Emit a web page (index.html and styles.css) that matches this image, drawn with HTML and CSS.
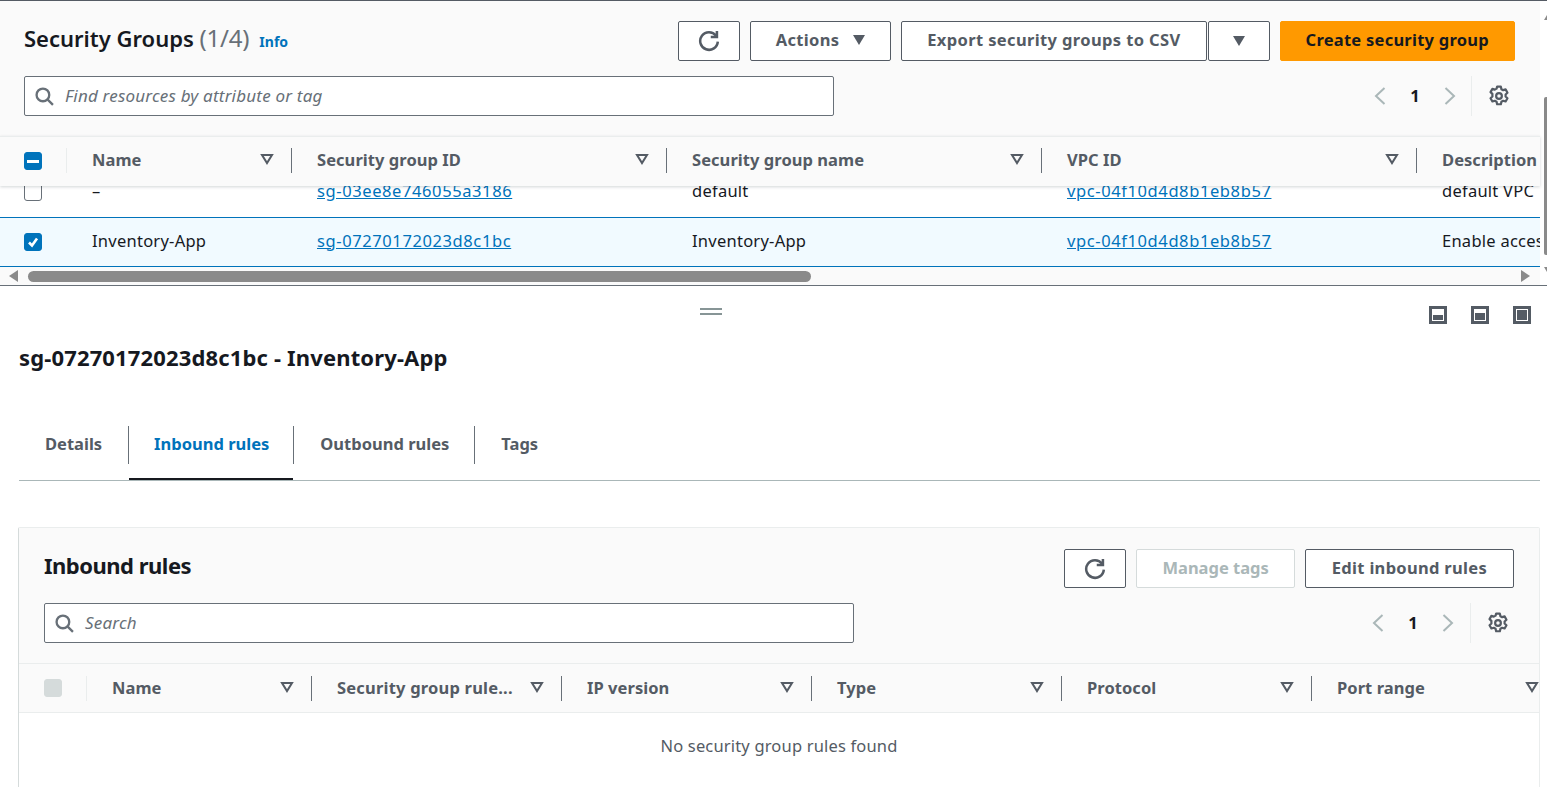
FILE: index.html
```html
<!DOCTYPE html>
<html lang="en">
<head>
  <meta charset="utf-8" />
  <title>Security Groups</title>
  <link rel="stylesheet" href="styles.css">
</head>
<body>
  <svg class="defs" width="0" height="0">
    <symbol id="refresh" viewBox="0 0 20 20"><path d="M16.4 5.2A8 8 0 1 0 18 10.5" /><path d="M17.2 .8v5.6h-5.6" /></symbol>
    <symbol id="search" viewBox="0 0 18 18"><circle cx="7.5" cy="7.5" r="6" /><path d="M12 12l5 5" /></symbol>
    <symbol id="gear" viewBox="0 0 20 20"><path d="M8.3 1.5h3.4l.5 2.3 1.6.9 2.2-.7 1.7 3-1.7 1.6v1.8l1.7 1.6-1.7 3-2.2-.7-1.6.9-.5 2.3H8.3l-.5-2.3-1.6-.9-2.2.7-1.7-3 1.7-1.6V8.1L2.3 6.5l1.7-3 2.2.7 1.6-.9z" /><circle cx="10" cy="10" r="2.6" /></symbol>
    <symbol id="filter" viewBox="0 0 14 12"><path d="M2 2h10l-5 8z" /></symbol>
    <symbol id="chev-left" viewBox="0 0 12 18"><path d="M10.5 1L2 9l8.5 8" /></symbol>
    <symbol id="chev-right" viewBox="0 0 12 18"><path d="M1.5 1L10 9l-8.5 8" /></symbol>
  </svg>

  <section class="top-panel">
    <div class="top-main">
      <div class="toolbar">
        <h1>Security Groups <span class="count">(1/4)</span></h1>
        <a class="info">Info</a>
        <div class="actions">
          <button class="btn btn-icon"><svg class="ico-refresh"><use href="#refresh" /></svg></button>
          <button class="btn">Actions <span class="caret"></span></button>
          <div class="btn-split">
            <button class="btn btn-export">Export security groups to CSV</button>
            <button class="btn btn-icon"><span class="caret"></span></button>
          </div>
          <button class="btn btn-primary">Create security group</button>
        </div>
      </div>
      <div class="filter-row">
        <div class="search-box"><svg class="ico-search"><use href="#search" /></svg><span>Find resources by attribute or tag</span></div>
        <div class="pager">
          <svg class="chev"><use href="#chev-left" /></svg><b>1</b><svg class="chev"><use href="#chev-right" /></svg>
          <span class="pager-sep"><svg class="ico-gear"><use href="#gear" /></svg></span>
        </div>
      </div>
      <div class="table-head sg-cols">
        <div class="th th-check"><span class="check check-mixed"></span></div>
        <div class="th">Name<svg class="ico-filter"><use href="#filter" /></svg></div>
        <div class="th">Security group ID<svg class="ico-filter"><use href="#filter" /></svg></div>
        <div class="th">Security group name<svg class="ico-filter"><use href="#filter" /></svg></div>
        <div class="th">VPC ID<svg class="ico-filter"><use href="#filter" /></svg></div>
        <div class="th th-last">Description</div>
      </div>
      <div class="table-body">
        <div class="tr sg-cols tr-clipped">
          <div class="td td-check"><span class="check"></span></div>
          <div class="td">–</div>
          <div class="td"><a>sg-03ee8e746055a3186</a></div>
          <div class="td">default</div>
          <div class="td"><a>vpc-04f10d4d8b1eb8b57</a></div>
          <div class="td">default VPC</div>
        </div>
        <div class="tr sg-cols tr-selected">
          <div class="td td-check"><span class="check check-on"><svg viewBox="0 0 14 14"><path d="M3 7.5l3 3 5-7" /></svg></span></div>
          <div class="td">Inventory-App</div>
          <div class="td"><a>sg-07270172023d8c1bc</a></div>
          <div class="td">Inventory-App</div>
          <div class="td"><a>vpc-04f10d4d8b1eb8b57</a></div>
          <div class="td">Enable access to the inventory app</div>
        </div>
      </div>
      <div class="hscroll">
        <span class="arrow arrow-left"></span>
        <span class="hscroll-track"><span class="hscroll-thumb"></span></span>
        <span class="arrow arrow-right"></span>
      </div>
    </div>
    <div class="vscroll"><span class="vscroll-up"></span><span class="vscroll-thumb"></span><span class="vscroll-down"></span></div>
  </section>

  <section class="detail">
    <div class="detail-bar">
      <span class="drag-handle"></span>
      <div class="view-icons">
        <span class="view-icon view-sm"></span>
        <span class="view-icon view-md"></span>
        <span class="view-icon view-lg"></span>
      </div>
    </div>
    <h2>sg-07270172023d8c1bc - Inventory-App</h2>
    <div class="tabs">
      <a class="tab tab-first">Details</a>
      <a class="tab tab-active">Inbound rules</a>
      <a class="tab">Outbound rules</a>
      <a class="tab tab-last">Tags</a>
    </div>
    <div class="card">
      <div class="card-head">
        <div class="toolbar card-toolbar">
          <h3>Inbound rules</h3>
          <div class="actions">
            <button class="btn btn-icon"><svg class="ico-refresh"><use href="#refresh" /></svg></button>
            <button class="btn btn-off">Manage tags</button>
            <button class="btn btn-edit">Edit inbound rules</button>
          </div>
        </div>
        <div class="filter-row card-filter">
          <div class="search-box"><svg class="ico-search"><use href="#search" /></svg><span>Search</span></div>
          <div class="pager">
            <svg class="chev"><use href="#chev-left" /></svg><b>1</b><svg class="chev"><use href="#chev-right" /></svg>
            <span class="pager-sep"><svg class="ico-gear"><use href="#gear" /></svg></span>
          </div>
        </div>
      </div>
      <div class="table-head rule-cols">
        <div class="th th-check"><span class="check check-off"></span></div>
        <div class="th">Name<svg class="ico-filter"><use href="#filter" /></svg></div>
        <div class="th"><span class="clip">Security group rule...</span><svg class="ico-filter"><use href="#filter" /></svg></div>
        <div class="th">IP version<svg class="ico-filter"><use href="#filter" /></svg></div>
        <div class="th">Type<svg class="ico-filter"><use href="#filter" /></svg></div>
        <div class="th">Protocol<svg class="ico-filter"><use href="#filter" /></svg></div>
        <div class="th th-last">Port range<svg class="ico-filter"><use href="#filter" /></svg></div>
      </div>
      <p class="empty">No security group rules found</p>
    </div>
  </section>
</body>
</html>
```

FILE: styles.css
```css
* {
  box-sizing: border-box;
}
html, body {
  height: 787px;
  overflow: hidden;
}
body {
  margin: 0;
  background: #fff;
  color: #16191f;
  font-family: "Noto Sans", Arial, sans-serif;
  font-size: 16.5px;
}
.defs {
  position: absolute;
}
a {
  color: #0073bb;
}

/* top panel */
.top-panel {
  height: 286px;
  display: flex;
  background: #fafafa;
  border-top: 1px solid #545b64;
  border-bottom: 1px solid #687078;
  position: relative;
}
.top-main {
  width: 1540px;
  flex: none;
  display: flex;
  flex-direction: column;
}
.toolbar {
  height: 40px;
  margin-top: 20px;
  padding: 0 25px 0 24px;
  display: flex;
  align-items: center;
}
h1 {
  margin: 0 0 6px;
  font-size: 22px;
  font-weight: 600;
  line-height: 36px;
}
.count {
  color: #687078;
  font-size: 24px;
  font-weight: 400;
  letter-spacing: -0.2px;
}
.info {
  margin: 0 0 0 10px;
  font-size: 14px;
  font-weight: 700;
}
.actions {
  margin-left: auto;
  display: flex;
  gap: 10px;
}
.btn {
  height: 40px;
  padding: 0 25px 4px;
  display: flex;
  align-items: center;
  justify-content: center;
  gap: 14px;
  background: #fff;
  border: 1px solid #545b64;
  border-radius: 2px;
  color: #545b64;
  font: 700 16.5px "Noto Sans", Arial, sans-serif;
  letter-spacing: 0.3px;
}
.btn-icon {
  width: 62px;
  padding: 0;
}
.btn-split {
  display: flex;
  gap: 1px;
}
.btn-export {
  letter-spacing: 0.37px;
}
.btn-primary {
  background: #ff9900;
  border-color: #ff9900;
  color: #16191f;
  letter-spacing: 0.25px;
}
.btn-off {
  padding-bottom: 2px;
  border-color: #d5dbdb;
  color: #aab7b8;
  letter-spacing: 0;
}
.btn-edit {
  padding: 0 26px 2px;
}
.caret {
  width: 0;
  height: 0;
  margin-top: 2px;
  border-left: 6.5px solid transparent;
  border-right: 6.5px solid transparent;
  border-top: 10px solid #545b64;
}
.btn-icon .caret {
  margin-top: 0;
}
.ico-refresh {
  width: 22px;
  height: 22px;
  fill: none;
  stroke: #545b64;
  stroke-width: 2.3;
}
.filter-row {
  height: 40px;
  margin-top: 15px;
  padding-left: 24px;
  display: flex;
  align-items: center;
  justify-content: space-between;
}
.search-box {
  width: 810px;
  height: 40px;
  padding-left: 10px;
  display: flex;
  align-items: center;
  gap: 11px;
  background: #fff;
  border: 1px solid #687078;
  border-radius: 2px;
  color: #687078;
  font-size: 17px;
  font-style: italic;
  letter-spacing: 0.2px;
}
.search-box span {
  padding-bottom: 2px;
}
.ico-search {
  width: 19px;
  height: 19px;
  fill: none;
  stroke: #687078;
  stroke-width: 2.2;
}
.pager {
  padding-right: 30px;
  display: flex;
  align-items: center;
  height: 40px;
}
.pager b {
  width: 58px;
  padding-bottom: 2px;
  text-align: center;
  font-weight: 700;
}
.chev {
  width: 12px;
  height: 18px;
  fill: none;
  stroke: #aab7b8;
  stroke-width: 2;
}
.pager-sep {
  height: 40px;
  margin-left: 15px;
  padding-left: 16px;
  display: flex;
  align-items: center;
  border-left: 1px solid #eaeded;
}
.ico-gear {
  width: 22px;
  height: 22px;
  fill: none;
  stroke: #545b64;
  stroke-width: 2;
  stroke-linejoin: round;
}

/* tables */
.table-head {
  height: 50px;
  margin-top: 20px;
  padding-bottom: 3px;
  flex: none;
  display: grid;
  align-items: center;
  position: relative;
  z-index: 1;
  background: #fafafa;
  border-top: 1px solid #eaeded;
  box-shadow: 0 1px 3px rgba(0, 28, 36, 0.18);
}
.sg-cols {
  grid-template-columns: 67px 224px 375px 375px 375px 124px;
}
.rule-cols {
  margin-top: 0;
  padding-bottom: 0;
  box-shadow: none;
  border-bottom: 1px solid #eaeded;
  grid-template-columns: 68px 224px 250px 250px 250px 250px 1fr;
}
.th {
  height: 25px;
  padding: 0 17px 2px 25px;
  display: flex;
  align-items: center;
  justify-content: space-between;
  border-left: 1px solid #687078;
  color: #545b64;
  font-weight: 700;
  letter-spacing: 0.05px;
  white-space: nowrap;
  overflow: hidden;
}
.th-check {
  padding: 2px 0 0 24px;
  border-left: 0;
  border-right: 1px solid #eaeded;
}
.rule-cols .th-check {
  padding: 0 0 0 25px;
}
.th-check + .th {
  border-left: 0;
}
.th-last {
  padding-right: 0;
}
.clip {
  max-width: 178px;
  letter-spacing: 0.2px;
}
.ico-filter {
  width: 14px;
  height: 12px;
  flex: none;
  fill: none;
  stroke: #545b64;
  stroke-width: 2;
}
.table-body {
  height: 81px;
  flex: none;
  overflow: hidden;
  background: #fff;
}
.tr {
  display: grid;
  height: 51px;
  align-items: center;
  white-space: nowrap;
  overflow: hidden;
}
.tr-clipped {
  margin-top: -20px;
}
.tr-selected {
  height: 50px;
  background: #f1faff;
  border-top: 1px solid #0073bb;
  border-bottom: 1px solid #0073bb;
}
.td {
  padding: 0 0 4px 26px;
  letter-spacing: 0.25px;
  overflow: hidden;
}
.tr-clipped .td {
  padding-bottom: 2px;
}
.td-check {
  padding: 0 0 0 24px;
  display: flex;
}
.tr-clipped .td-check {
  padding-bottom: 0;
}
.td-check + .td {
  padding-left: 25px;
}
.td a {
  text-decoration: underline;
  letter-spacing: 0.6px;
}
.check {
  width: 18px;
  height: 18px;
  display: flex;
  align-items: center;
  justify-content: center;
  background: #fff;
  border: 1px solid #687078;
  border-radius: 3px;
}
.check-on, .check-mixed {
  background: #0073bb;
  border-color: #0073bb;
}
.check-mixed::after {
  content: "";
  width: 12px;
  height: 3px;
  background: #fff;
}
.check-on svg {
  width: 14px;
  height: 14px;
  fill: none;
  stroke: #fff;
  stroke-width: 2.6;
}
.check-off {
  background: #d5dbdb;
  border-color: #d5dbdb;
}
.hscroll {
  flex: 1;
  display: flex;
  align-items: center;
  padding: 0 10px 0 9px;
}
.arrow {
  width: 0;
  height: 0;
  border-top: 6px solid transparent;
  border-bottom: 6px solid transparent;
}
.arrow-left {
  border-right: 9px solid #8a8a8a;
}
.arrow-right {
  border-left: 9px solid #8a8a8a;
}
.hscroll-track {
  flex: 1;
  padding: 0 10px;
}
.hscroll-thumb {
  display: block;
  width: 783px;
  height: 11px;
  background: #8a8a8a;
  border-radius: 6px;
}
.vscroll {
  position: absolute;
  top: 0;
  right: 0;
  bottom: 0;
  width: 7px;
  background: #fff;
}
.vscroll-thumb {
  position: absolute;
  top: 96px;
  right: 0;
  width: 3px;
  height: 158px;
  background: #8a8a8a;
  border-radius: 2px 0 0 2px;
}
.vscroll-up, .vscroll-down {
  position: absolute;
  right: 0;
  width: 0;
  height: 0;
  border-left: 3px solid transparent;
  border-right: 0;
}
.vscroll-up {
  top: 14px;
  border-bottom: 5px solid #8a8a8a;
}
.vscroll-down {
  top: 266px;
  border-top: 5px solid #8a8a8a;
}

/* detail split panel */
.detail {
  height: 501px;
  padding: 0 7px 0 19px;
  overflow: hidden;
}
.detail-bar {
  height: 38px;
  display: flex;
  align-items: center;
  justify-content: space-between;
  padding-top: 12px;
}
.drag-handle {
  margin-left: 681px;
  width: 22px;
  height: 7px;
  border-top: 2px solid #879596;
  border-bottom: 2px solid #879596;
}
.view-icons {
  display: flex;
  gap: 24px;
  margin: 7px 9px 0 0;
}
.view-icon {
  width: 18px;
  height: 18px;
  border: 3px solid #545b64;
  display: flex;
  align-items: flex-end;
  padding: 1px;
}
.view-icon::after {
  content: "";
  width: 100%;
  background: #545b64;
}
.view-sm::after { height: 5px; }
.view-md::after { height: 7px; }
.view-lg::after { height: 100%; }
h2 {
  margin: 18px 0 0;
  font-size: 22px;
  font-weight: 700;
  line-height: 30px;
  letter-spacing: 0.15px;
}
.tabs {
  height: 56px;
  margin-top: 53px;
  padding-top: 1px;
  display: flex;
  align-items: flex-start;
  border-bottom: 1px solid #aab7b8;
}
.tab {
  height: 38px;
  padding: 0 25px 4px 26px;
  display: flex;
  align-items: center;
  border-right: 1px solid #687078;
  color: #545b64;
  font-weight: 700;
}
.tab-first {
  padding-right: 26px;
}
.tab-last {
  border-right: 0;
}
.tab-active {
  position: relative;
  padding: 0 24px 4px 25px;
  color: #0073bb;
}
.tab-active::after {
  content: "";
  position: absolute;
  left: 0;
  right: 0;
  bottom: -16px;
  height: 2px;
  background: #16191f;
}
.card {
  height: 280px;
  margin: 46px 0 0 -1px;
  background: #fff;
  border: 1px solid #eaeded;
  border-left-color: #d5dbdb;
  border-radius: 2px;
}
.card-head {
  background: #fafafa;
  height: 135px;
}
.card-toolbar {
  margin-top: 0;
  padding: 21px 25px 0 25px;
  height: 60px;
}
h3 {
  margin: 0 0 7px;
  font-size: 22px;
  font-weight: 700;
  line-height: 36px;
  letter-spacing: -0.5px;
}
.card-toolbar .btn {
  height: 39px;
}
.card-filter {
  margin-top: 15px;
  padding-left: 25px;
}
.card-filter .pager-sep {
  margin-left: 16px;
}
.empty {
  margin: 21px 0 0;
  text-align: center;
  color: #545b64;
  letter-spacing: 0.17px;
}
```
